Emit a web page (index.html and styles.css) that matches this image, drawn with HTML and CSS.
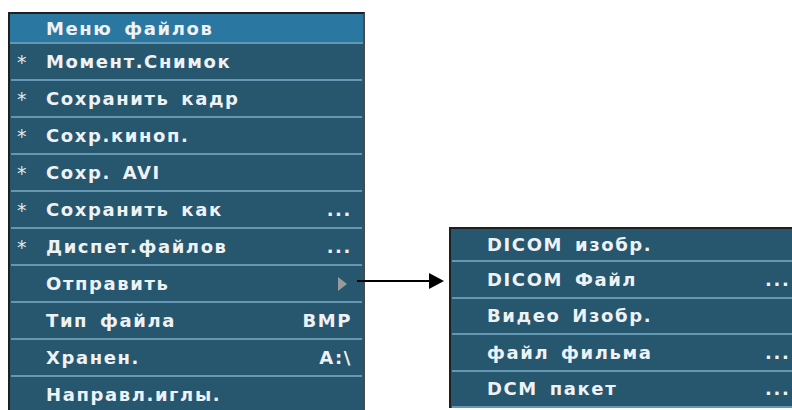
FILE: index.html
```html
<!DOCTYPE html>
<html>
<head>
<meta charset="utf-8">
<link rel="stylesheet" href="styles.css">
</head>
<body>
<div class="stage">
  <div class="menu main">
    <div class="row title"><span class="mark"></span><span class="label">Меню файлов</span></div>
    <div class="row"><span class="mark">*</span><span class="label">Момент.Снимок</span></div>
    <div class="row"><span class="mark">*</span><span class="label">Сохранить кадр</span></div>
    <div class="row"><span class="mark">*</span><span class="label">Сохр.кинοп.</span></div>
    <div class="row"><span class="mark">*</span><span class="label">Сохр. AVI</span></div>
    <div class="row"><span class="mark">*</span><span class="label">Сохранить как</span><span class="val">...</span></div>
    <div class="row"><span class="mark">*</span><span class="label">Диспет.файлов</span><span class="val">...</span></div>
    <div class="row"><span class="mark"></span><span class="label">Отправить</span><span class="val"><span class="tri"></span></span></div>
    <div class="row"><span class="mark"></span><span class="label">Тип файла</span><span class="val">BMP</span></div>
    <div class="row"><span class="mark"></span><span class="label">Хранен.</span><span class="val">A:\</span></div>
    <div class="row"><span class="mark"></span><span class="label">Направл.иглы.</span></div>
  </div>
  <div class="menu sub">
    <div class="row"><span class="label">DICOM изобр.</span></div>
    <div class="row"><span class="label">DICOM Файл</span><span class="val">...</span></div>
    <div class="row"><span class="label">Видео Изобр.</span></div>
    <div class="row"><span class="label">файл фильма</span><span class="val">...</span></div>
    <div class="row"><span class="label">DCM пакет</span><span class="val">...</span></div>
  </div>
  <svg class="arrow" width="90" height="20" viewBox="0 0 90 20">
    <line x1="0" y1="10" x2="74" y2="10" stroke="#000" stroke-width="2"/>
    <polygon points="72,2 87,10 72,18" fill="#000"/>
  </svg>
</div>
</body>
</html>
```
FILE: styles.css
```css
html, body {
  margin: 0;
  padding: 0;
  background: #ffffff;
}
.stage {
  position: relative;
  display: flex;
  align-items: flex-start;
  padding: 12px 0 0 8px;
  height: 398px;
  overflow: hidden;
}
.menu {
  background: #27566f;
  color: #eef2f4;
  font-family: "DejaVu Sans", Verdana, sans-serif;
  font-weight: bold;
  font-size: 18px;
  letter-spacing: 1.6px;
  word-spacing: 4px;
  border-top: 2px solid #1f1f1f;
  border-left: 2px solid #1f1f1f;
  display: flex;
  flex-direction: column;
}
.main {
  width: 353px;
  border-right: 2px solid #4a4a4a;
  flex: none;
}
.sub {
  margin-left: 84px;
  margin-top: 215px;
  width: 345px;
  flex: none;
}
.row {
  display: flex;
  align-items: center;
  height: 35px;
  margin: 0 1px;
  border-bottom: 2px solid #6596b3;
  padding: 0 0 0 6px;
}
.main .row.title {
  height: 28px;
  background: #2a78a2;
  margin: 0;
  padding-left: 7px;
}
.sub .row {
  height: 34.5px;
  padding-left: 35px;
}
.sub .row:first-child {
  height: 31px;
}
.mark {
  width: 29px;
  font-weight: normal;
  font-size: 19px;
  flex: none;
  color: #dfe8ee;
}
.label {
  flex: 1;
  white-space: nowrap;
}
.val {
  padding-right: 10px;
  display: flex;
  align-items: center;
}
.sub .val {
  padding-right: 0;
  width: 30px;
}
.tri {
  display: block;
  width: 0;
  height: 0;
  border-top: 7px solid transparent;
  border-bottom: 7px solid transparent;
  border-left: 9px solid #9a9a9a;
  margin-right: 5px;
}
.arrow {
  position: absolute;
  left: 357px;
  top: 271px;
}
```
